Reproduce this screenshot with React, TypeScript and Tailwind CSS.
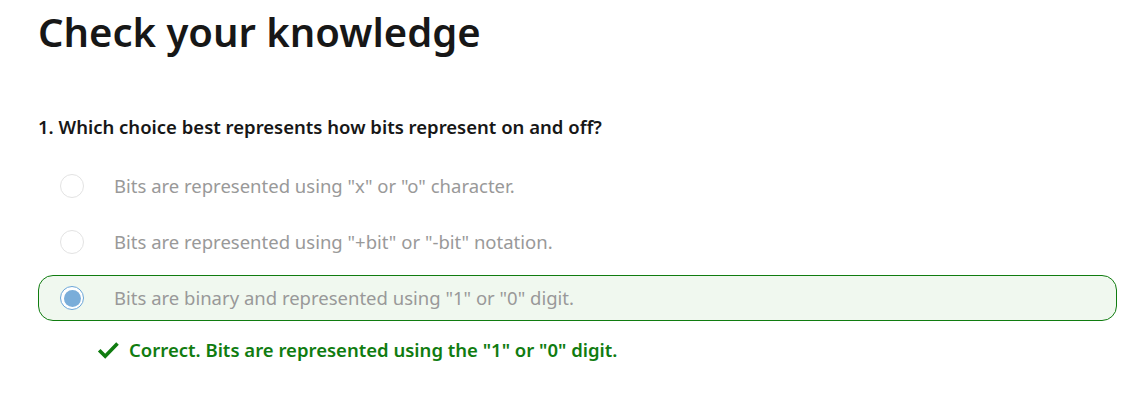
const options = [
  { text: 'Bits are represented using "x" or "o" character.', selected: false },
  { text: 'Bits are represented using "+bit" or "-bit" notation.', selected: false },
  { text: 'Bits are binary and represented using "1" or "0" digit.', selected: true },
];

function Radio({ selected }: { selected: boolean }) {
  if (selected) {
    return (
      <span className="flex h-6 w-6 shrink-0 items-center justify-center rounded-full border-[1.5px] border-[#6aa5d8] bg-white">
        <span className="h-[17px] w-[17px] rounded-full bg-[#7aadd9]" />
      </span>
    );
  }
  return <span className="h-6 w-6 shrink-0 rounded-full border border-[#e3e3e3] bg-white" />;
}

export default function App() {
  return (
    <div className="min-h-[400px] bg-white pl-[38px] pr-[30px] pt-[6px] font-['Segoe_UI','Noto_Sans',sans-serif] text-[#171717]">
      <h1 className="text-[40px] font-semibold leading-[52px]">Check your knowledge</h1>
      <p className="mt-[57px] text-[18.5px] font-semibold leading-6">
        1. Which choice best represents how bits represent on and off?
      </p>
      <div className="mt-[24px] flex flex-col gap-[10px]">
        {options.map((o) => (
          <div
            key={o.text}
            className={`flex h-[46px] items-center gap-[30px] rounded-[15px] border pl-[21px] ${
              o.selected ? "border-[#107c10] bg-[#f0f8ef]" : "border-transparent"
            }`}
          >
            <Radio selected={o.selected} />
            <span className="text-[18.5px] text-[#999999]">{o.text}</span>
          </div>
        ))}
      </div>
      <div className="mt-[15px] flex items-center gap-[9px] pl-[59px] text-[18.5px] font-semibold text-[#107c10]">
        <svg width="23" height="18" viewBox="0 0 23 18" fill="none">
          <path d="M2.2 9.3 L8.2 15.3 L20.5 2.6" stroke="#107c10" strokeWidth="3.6" />
        </svg>
        <span>Correct. Bits are represented using the "1" or "0" digit.</span>
      </div>
    </div>
  );
}
